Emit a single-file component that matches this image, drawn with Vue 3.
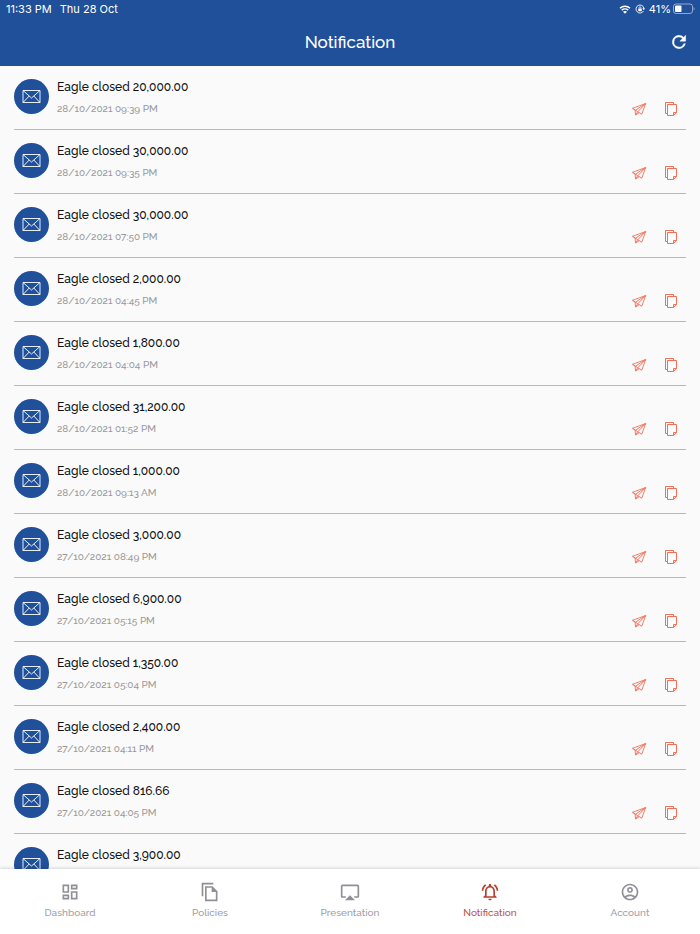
<template>
  <div class="app">
    <header class="header">
      <div class="status-bar">
        <span class="status-time">11:33 PM</span>
        <span>Thu 28 Oct</span>
        <div class="status-right">
          <svg class="wifi" viewBox="0 0 24 18" aria-hidden="true">
            <path d="M2 6.5C7.5 1.200 16.500 1.200 22 6.500M5.600 10.300c3.600-3.300 9.200-3.300 12.800 0" fill="none" stroke="#fff" stroke-width="3" />
            <path d="M12 17.500l-4-4.200c2.200-2 5.800-2 8 0z" fill="#fff" />
          </svg>
          <svg class="lock" viewBox="0 0 20 20" aria-hidden="true">
            <path d="M17 14a8 8 0 1 1 .9-5.500" fill="none" stroke="#fff" stroke-width="1.800" />
            <path d="M14.500 8.500h5.500l-2.500 4z" fill="#fff" />
            <rect x="6.500" y="9" width="7" height="5.500" rx="1" fill="#fff" />
            <path d="M8 9V7.500a2 2 0 0 1 4 0V9" fill="none" stroke="#fff" stroke-width="1.500" />
          </svg>
          <div class="charge">
            <span>41%</span>
            <svg class="battery" viewBox="0 0 22 12" aria-hidden="true">
              <rect x="0.500" y="1" width="19" height="9.500" rx="2.500" fill="none" stroke="#fff" stroke-opacity="0.500" />
              <rect x="2" y="2.500" width="6.500" height="6.500" rx="1" fill="#fff" />
              <path d="M20.600 4v3.500c1.400-.5 1.400-3 0-3.500z" fill="#fff" fill-opacity="0.500" />
            </svg>
          </div>
        </div>
      </div>
      <div class="title-bar">
        <h1>Notification</h1>
        <button class="refresh" type="button" aria-label="Refresh">
          <svg viewBox="0 0 24 24" aria-hidden="true">
            <path d="M17.650 6.350A7.958 7.958 0 0 0 12 4a8 8 0 1 0 7.730 10h-2.080A6 6 0 1 1 12 6c1.660 0 3.140.69 4.220 1.780L13 11h7V4z" fill="#fff" stroke="#fff" stroke-width="0.500" />
          </svg>
        </button>
      </div>
    </header>

    <main class="list">
      <article v-for="(item, i) in notifications" :key="i" class="row">
        <div class="avatar">
          <svg viewBox="0 0 19 15" aria-hidden="true">
            <path d="M1 1.500h17v12H1zM1 1.500l8.500 7.500L18 1.500M1 13.500l6.200-6.500M18 13.500l-6.200-6.500" fill="none" stroke="#fff" stroke-width="0.900" stroke-linejoin="round" />
          </svg>
        </div>
        <div class="content">
          <h2>Eagle closed {{ item.amount }}</h2>
          <time v-if="item.date">{{ item.date }}</time>
        </div>
        <div class="actions">
          <button type="button" aria-label="Send">
            <svg viewBox="0 0 16 16" aria-hidden="true">
              <path d="M1.500 7.300L14.700 2.500l-3.900 10.700-4.100-2.400zM1.500 7.300l2.700 2L14.700 2.500 6.700 10.800l-2.200 3.200-.3-4.700M4.500 14l3.700-2.300" fill="none" stroke="#ef7058" stroke-width="0.900" stroke-linejoin="round" />
            </svg>
          </button>
          <button type="button" aria-label="Copy">
            <svg viewBox="0 0 16 16" aria-hidden="true">
              <path d="M4.500 3.500h9v8l-3 3h-6zM13.500 11.500h-3v3M4.500 12.500h-2v-11h8v2" fill="none" stroke="#ef7058" stroke-width="1" stroke-linejoin="round" />
            </svg>
          </button>
        </div>
      </article>
    </main>

    <nav class="tabs">
      <a v-for="tab in tabs" :key="tab.label" href="#" class="tab" :class="{ active: tab.active }">
        <svg viewBox="0 0 24 24" aria-hidden="true"><path :d="tab.icon" /></svg>
        <span>{{ tab.label }}</span>
      </a>
    </nav>
  </div>
</template>

<script setup>
const notifications = [
  { amount: '20,000.00', date: '28/10/2021 09:39 PM' },
  { amount: '30,000.00', date: '28/10/2021 09:35 PM' },
  { amount: '30,000.00', date: '28/10/2021 07:50 PM' },
  { amount: '2,000.00', date: '28/10/2021 04:45 PM' },
  { amount: '1,800.00', date: '28/10/2021 04:04 PM' },
  { amount: '31,200.00', date: '28/10/2021 01:52 PM' },
  { amount: '1,000.00', date: '28/10/2021 09:13 AM' },
  { amount: '3,000.00', date: '27/10/2021 08:49 PM' },
  { amount: '6,900.00', date: '27/10/2021 05:15 PM' },
  { amount: '1,350.00', date: '27/10/2021 05:04 PM' },
  { amount: '2,400.00', date: '27/10/2021 04:11 PM' },
  { amount: '816.66', date: '27/10/2021 04:05 PM' },
  { amount: '3,900.00' },
]

const tabs = [
  {
    label: 'Dashboard',
    icon: 'M19 5v2h-4V5h4M9 5v6H5V5h4m10 8v6h-4v-6h4M9 17v2H5v-2h4M21 3h-8v6h8V3zM11 3H3v10h8V3zm10 8h-8v10h8V11zm-10 4H3v6h8v-6z',
  },
  {
    label: 'Policies',
    icon: 'M16 1H2v16h2V3h12V1zm-1 4l6 6v12H6V5h9zM8 7v14h11v-9h-5V7H8z',
  },
  {
    label: 'Presentation',
    icon: 'M6 22h12l-6-6zM21 3H3c-1.100 0-2 .9-2 2v12c0 1.100.9 2 2 2h4v-2H3V5h18v12h-4v2h4c1.100 0 2-.9 2-2V5c0-1.100-.9-2-2-2z',
  },
  {
    label: 'Notification',
    active: true,
    icon: 'M12 22c1.100 0 2-.9 2-2h-4c0 1.100.9 2 2 2zm6-6v-5c0-3.070-1.630-5.640-4.500-6.320V4c0-.83-.67-1.500-1.500-1.500s-1.500.67-1.500 1.500v.68C7.640 5.360 6 7.920 6 11v5l-2 2v1h16v-1l-2-2zm-2 1H8v-6c0-2.480 1.510-4.500 4-4.500s4 2.020 4 4.500v6zM7.580 4.080L6.150 2.650C3.750 4.480 2.170 7.300 2.030 10.500h2c.15-2.650 1.510-4.970 3.550-6.420zm12.390 6.420h2c-.15-3.200-1.730-6.020-4.120-7.850l-1.420 1.430c2.020 1.450 3.390 3.770 3.540 6.420z',
  },
  {
    label: 'Account',
    icon: 'M12 2C6.480 2 2 6.480 2 12s4.480 10 10 10 10-4.480 10-10S17.520 2 12 2zM7.350 18.500C8.660 17.560 10.260 17 12 17s3.340.56 4.650 1.500C15.340 19.440 13.740 20 12 20s-3.340-.56-4.650-1.500zm10.790-1.380C16.450 15.800 14.320 15 12 15s-4.450.8-6.140 2.120C4.700 15.730 4 13.950 4 12c0-4.420 3.580-8 8-8s8 3.580 8 8c0 1.950-.7 3.730-1.860 5.120zM12 6c-1.930 0-3.500 1.570-3.500 3.500S10.070 13 12 13s3.500-1.570 3.500-3.500S13.930 6 12 6zm0 5c-.83 0-1.500-.67-1.500-1.500S11.170 8 12 8s1.500.67 1.500 1.500S12.830 11 12 11z',
  },
]
</script>

<style>
body {
  margin: 0;
  background: #fafafa;
}
</style>

<style scoped>
.app {
  display: flex;
  flex-direction: column;
  height: 100vh;
  font-family: Raleway, Lato, sans-serif;
  color: #111;
}
button {
  display: flex;
  padding: 0;
  background: none;
  border: none;
  cursor: pointer;
}
h1, h2 { margin: 0; font-weight: 500; }
svg { display: block; }

.header {
  flex: none;
  background: #20509a;
  color: #fff;
}
.status-bar {
  display: flex;
  align-items: center;
  height: 18px;
  padding: 0 5px 0 6px;
  font-family: Inter, sans-serif;
  font-size: 11px;
}
.status-time { margin-right: 8px; }
.status-right {
  display: flex;
  align-items: center;
  gap: 4px;
  margin-left: auto;
}
.charge {
  display: flex;
  align-items: center;
  gap: 2px;
}
.wifi { width: 12px; height: 9px; }
.lock { width: 10px; height: 10px; }
.battery { width: 22px; height: 12px; }
.title-bar {
  display: grid;
  grid-template-columns: 1fr auto 1fr;
  align-items: center;
  height: 48px;
  padding: 0 11px;
}
.title-bar h1 {
  grid-column: 2;
  font-size: 17px;
  line-height: 24px;
}
.refresh { justify-self: end; }
.refresh svg { width: 20px; height: 20px; }

.list {
  flex: 1;
  min-height: 0;
  padding: 0 14px;
  overflow-y: auto;
  scrollbar-width: none;
}
.row {
  display: flex;
  box-sizing: border-box;
  height: 64px;
  padding-top: 12px;
  border-bottom: 1px solid #b8b8b8;
}
.avatar {
  display: flex;
  flex: none;
  align-items: center;
  justify-content: center;
  width: 35px;
  height: 35px;
  margin: 1px 8px 0 0;
  background: #20509a;
  border-radius: 50%;
}
.avatar svg { width: 19px; height: 15px; }
.content { flex: 1; }
.content h2 {
  font-size: 12px;
  line-height: 18px;
}
.content time {
  display: block;
  margin-top: 4px;
  font-size: 10px;
  font-weight: 500;
  line-height: 18px;
  color: #999;
}
.actions {
  display: flex;
  align-items: flex-end;
  gap: 16px;
  padding: 0 7px 12px 0;
}
.actions svg { width: 16px; height: 16px; }

.tabs {
  position: relative;
  display: flex;
  flex: none;
  height: 65px;
  background: #fff;
  box-shadow: 0 -1px 3px rgba(0, 0, 0, 0.15);
}
.tab {
  display: flex;
  flex: 1;
  flex-direction: column;
  align-items: center;
  gap: 3px;
  padding-top: 13px;
  font-size: 10px;
  font-weight: 500;
  line-height: 16px;
  color: #a0a0a8;
  text-decoration: none;
}
.tab svg {
  width: 20px;
  height: 20px;
  fill: #8f8f98;
}
.tab.active { color: #c0523f; }
.tab.active svg { fill: #b5402d; }
</style>
